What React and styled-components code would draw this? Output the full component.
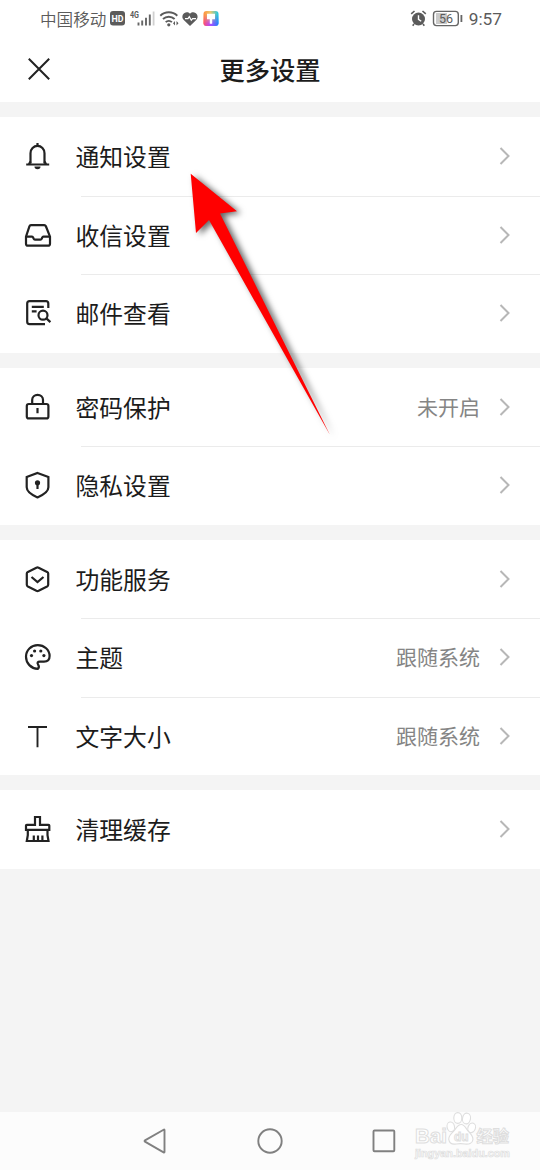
import styled, { createGlobalStyle } from "styled-components";

const icons = {
  bell: (
    <>
      <path d="M8.500 22.500V12.200a7 7.300 0 0 1 14 0v10.300" />
      <path d="M15.500 2v3M4.200 23.500h23M7 23l1.500-2.500M24 23l-1.500-2.500" />
      <path d="M12.500 25.600h6a3 2.700 0 0 1-6 0z" fill="#222" stroke="none" />
    </>
  ),
  inbox: (
    <>
      <path d="M9 5.200h13.200q1.200 0 1.700 1.100L28 16.600v7.100q0 2-2 2H6q-2 0-2-2v-7.100L7.400 6.300Q7.800 5.200 9 5.200z" />
      <path d="M4 16.700h6q.9 0 1.200 1l.4 1q.4 1 1.400 1h5.400q1 0 1.400-1l.4-1q.3-1 1.200-1H28" />
    </>
  ),
  mail: (
    <>
      <path d="M26.300 10V5.500q0-2.300-2.300-2.300H7.500Q5.200 3.200 5.200 5.500v18.300q0 2.300 2.300 2.300H23" />
      <path d="M9.800 8.900h12M9.800 13.300h4.800" />
      <circle cx="21" cy="17.200" r="4.500" />
      <path d="m24.400 20.400 4 3.700" />
    </>
  ),
  lock: (
    <>
      <rect x="4.800" y="12" width="21.600" height="14.400" rx="2" />
      <path d="M10.200 12V7.700a5.400 4.900 0 0 1 10.800 0V12M15.500 16v5.300" />
    </>
  ),
  shield: (
    <>
      <path d="m15.500 3 10.900 3.900v10.400c0 4.500-5.300 7.700-10.900 10.100C9.900 25 4.700 21.800 4.700 17.300V6.900z" />
      <circle cx="15.500" cy="12.800" r="2.600" fill="#222" stroke="none" />
      <path d="M15.500 13v6" />
    </>
  ),
  service: (
    <>
      <path d="m14.400 3.700-8.500 4.200q-1.100.6-1.100 1.700v11.200q0 1.100 1.100 1.700l8.500 4.300q1.100.5 2.200 0l8.500-4.300q1.100-.6 1.100-1.700V9.600q0-1.100-1.100-1.700l-8.500-4.200q-1.100-.5-2.200 0z" />
      <path d="m9.500 13 6 5.100 6-5.100" />
    </>
  ),
  palette: (
    <>
      <path d="M15.800 26.800C9 26.500 4 21.300 4 14.800 4 8.300 9.200 3.200 15.700 3.200S27.600 7.800 27.600 14c0 4-2.200 5.600-5.600 5.600h-4.200c-2.100 0-2.800 1.300-1.800 2.700 1.100 1.600 1.200 3.300-.2 4.500z" />
      <g fill="#222" stroke="none">
        <circle cx="9.500" cy="13.600" r="1.600" />
        <circle cx="12.600" cy="9" r="1.600" />
        <circle cx="18.800" cy="9" r="1.600" />
        <circle cx="21.900" cy="13.600" r="1.600" />
      </g>
    </>
  ),
  text: <path d="M6 6h19M15.500 6v20.300" />,
  brush: (
    <>
      <path d="M13 10.800V3h5v7.800h8.500q.8 0 .8.8v4.300H4v-4.300q0-.8.8-.8z" />
      <path d="M5.800 16v5.200L4.800 27h21.700l-1-5.800V16M11.800 27v-5.600M16 27v-5.600M20.400 27v-5.600" />
    </>
  ),
};

const groups = [
  [
    { icon: "bell", label: "通知设置" },
    { icon: "inbox", label: "收信设置" },
    { icon: "mail", label: "邮件查看" },
  ],
  [
    { icon: "lock", label: "密码保护", value: "未开启" },
    { icon: "shield", label: "隐私设置" },
  ],
  [
    { icon: "service", label: "功能服务" },
    { icon: "palette", label: "主题", value: "跟随系统" },
    { icon: "text", label: "文字大小", value: "跟随系统" },
  ],
  [{ icon: "brush", label: "清理缓存" }],
];

function StatusIcons() {
  return (
    <svg width="112" height="20" viewBox="0 0 112 20">
      <rect x="1" y="2" width="15" height="14.500" rx="3" fill="#5b5b5b" />
      <StatusText x="2.500" y="12.800" $size={9.500} $color="#fff" $bold textLength="12" lengthAdjust="spacingAndGlyphs">HD</StatusText>
      <StatusText x="21" y="9" $size={9} $bold textLength="9" lengthAdjust="spacingAndGlyphs">4G</StatusText>
      <path d="M29.500 16.500v-3M33.200 16.500v-5M37 16.500V8.700M40.800 16.500V5.500" stroke="#666" strokeWidth="1.900" />
      <path d="M44.600 16.500V2.500" stroke="#d0d0d0" strokeWidth="1.800" />
      <g fill="none" stroke="#5b5b5b" strokeWidth="1.900">
        <path d="M51.300 6.700a12.300 12.300 0 0 1 17 0M54 10a8.400 8.400 0 0 1 11.600 0M56.700 13.100a4.500 4.500 0 0 1 6.200 0" />
      </g>
      <circle cx="59.800" cy="15.800" r="1.600" fill="#5b5b5b" />
      <path d="m66 12-2 2.300 2 2.300zm1.500 0 2 2.300-2 2.300z" fill="#5b5b5b" />
      <path d="M81 17 74.800 11C70.500 6.500 77 .3 81 4.700c4-4.400 10.500 1.800 6.200 6.300z" fill="#5b5b5b" />
      <path d="M76 9.700h3l1.300-2 2 3.600 1.300-1.600H87" fill="none" stroke="#fff" strokeWidth="1.200" />
      <defs>
        <linearGradient id="theme" x1="0" y1="0" x2="1" y2="0">
          <stop offset="0" stopColor="#ff8f3c" />
          <stop offset=".45" stopColor="#ecc96e" />
          <stop offset="1" stopColor="#16c8e8" />
        </linearGradient>
        <linearGradient id="themeLow" x1="0" y1="0" x2="1" y2="0">
          <stop offset="0" stopColor="#ff4b75" />
          <stop offset=".45" stopColor="#b04cff" />
          <stop offset="1" stopColor="#237cff" />
        </linearGradient>
        <linearGradient id="fade" x1="0" y1="0" x2="0" y2="1">
          <stop offset=".2" stopColor="#000" />
          <stop offset=".8" stopColor="#fff" />
        </linearGradient>
        <mask id="low">
          <rect x="94" y="2" width="16" height="16" fill="url(#fade)" />
        </mask>
      </defs>
      <rect x="94.500" y="2" width="15" height="15" rx="3" fill="url(#theme)" />
      <rect x="94.500" y="2" width="15" height="15" rx="3" fill="url(#themeLow)" mask="url(#low)" />
      <path d="M98 4.700h8v5.500h-2.800v4.500h-2.400v-4.500H98z" fill="#fff" />
    </svg>
  );
}

function AlarmBattery() {
  return (
    <svg width="56" height="20" viewBox="0 0 56 20">
      <circle cx="8.500" cy="10" r="6.500" fill="#5b5b5b" />
      <path d="M1.200 4.800 4.500 2M12.500 2l3.300 2.800M4 15l-1.300 1.800M13 15l1.300 1.800" stroke="#5b5b5b" strokeWidth="1.600" />
      <path d="M8.500 6.300v4l2.700 2" fill="none" stroke="#fff" strokeWidth="1.400" />
      <rect x="26" y="4" width="11" height="11" fill="#cacaca" />
      <rect x="23.500" y="2.400" width="24.800" height="14.200" rx="3" fill="none" stroke="#666" strokeWidth="1.400" />
      <path d="M51.400 6v7" stroke="#666" strokeWidth="1.800" />
      <StatusText x="29" y="13.900" $size={12.500}>56</StatusText>
    </svg>
  );
}

function Row({ icon, label, value }) {
  return (
    <SRow>
      <Icon viewBox="0 0 30 30" $thin={icon === "text"}>{icons[icon]}</Icon>
      <Label>{label}</Label>
      <Value>{value}</Value>
      <Chevron viewBox="0 0 12 20">
        <path d="m1.500 2 8 8-8 8" />
      </Chevron>
    </SRow>
  );
}

function Watermark() {
  return (
    <SWatermark viewBox="0 0 110 52">
      <g fill="#fff" stroke="#dedede" strokeWidth="1.100">
        <ellipse cx="38.800" cy="22.800" rx="3.700" ry="4.900" transform="rotate(-12 38.800 22.800)" />
        <ellipse cx="45.800" cy="14" rx="4" ry="5.400" />
        <ellipse cx="54.500" cy="14.500" rx="4" ry="5.400" transform="rotate(10 54.500 14.500)" />
        <ellipse cx="59.700" cy="23.800" rx="3.700" ry="4.900" transform="rotate(20 59.700 23.800)" />
        <path d="M49.300 20.500c-4 0-5 4-8 7.200-3 2.800-5 4.800-4.500 8 .7 4 4.300 4.800 7.300 4.300 3-.5 6-.5 9 0 3.500.6 7.300-.5 7.800-4.300.4-3-1.800-5.500-4.300-8-2.500-2.800-4-7.200-7.300-7.200z" />
      </g>
      <MarkText x="3" y="38.500" $size={20.500} textLength="32" lengthAdjust="spacingAndGlyphs">Bai</MarkText>
      <MarkText x="42" y="37" $size={12.500} textLength="14.500" lengthAdjust="spacingAndGlyphs">du</MarkText>
      <MarkText x="64.500" y="37.500" $size={16} textLength="32.500" lengthAdjust="spacingAndGlyphs">经验</MarkText>
      <MarkText x="3" y="52.500" $size={10.500} $small textLength="95" lengthAdjust="spacingAndGlyphs">jingyan.baidu.com</MarkText>
    </SWatermark>
  );
}

export default function App() {
  return (
    <Page>
      <GlobalStyle />
      <StatusBar>
        <Carrier>中国移动</Carrier>
        <StatusIcons />
        <StatusRight>
          <AlarmBattery />
          <Clock>9:57</Clock>
        </StatusRight>
      </StatusBar>

      <Header>
        <CloseIcon viewBox="0 0 24 24">
          <path d="m1.800 1.800 20.400 20.400M22.200 1.800 1.800 22.200" />
        </CloseIcon>
        <Title>更多设置</Title>
      </Header>

      <Groups>
        {groups.map((rows) => (
          <Group key={rows[0].label}>
            {rows.map((row) => (
              <Row key={row.label} {...row} />
            ))}
          </Group>
        ))}
      </Groups>

      <NavBar>
        <NavIcon viewBox="0 0 28 28">
          <path d="M23.500 3.200v21.600q0 1-.9.500L4 14.700q-.9-.7 0-1.300L22.600 2.700q.9-.5.900.5z" />
        </NavIcon>
        <NavIcon viewBox="0 0 28 28">
          <circle cx="14" cy="14" r="11.700" />
        </NavIcon>
        <NavIcon viewBox="0 0 28 28">
          <rect x="3.500" y="3.500" width="20.800" height="20.800" rx="1" />
        </NavIcon>
      </NavBar>

      <Watermark />
      <Pointer viewBox="0 0 170 290">
        <path d="M20.700 13.700 67 51.300 50 53.500 160 275 39 60 26 73z" />
      </Pointer>
    </Page>
  );
}

// =========================== STYLES ============================= //

const GlobalStyle = createGlobalStyle`
  * {
    box-sizing: border-box;
  }
  body {
    margin: 0;
    background: #f4f4f4;
    font-family: "Noto Sans CJK SC", sans-serif;
  }
`;

const Page = styled.div`
  position: relative;
  display: flex;
  flex-direction: column;
  width: 540px;
  height: 1170px;
  overflow: hidden;
  background: #f4f4f4;
`;

const StatusBar = styled.div`
  display: flex;
  align-items: center;
  height: 38px;
  padding: 0 38px 0 40px;
  background: #fff;
  color: #5b5b5b;
`;

const Carrier = styled.span`
  width: 69px;
  font-size: 16.6px;
  font-weight: 350;
  line-height: 24px;
  white-space: nowrap;
`;

const StatusRight = styled.div`
  display: flex;
  align-items: center;
  gap: 3px;
  margin-left: auto;
`;

const Clock = styled.span`
  font-family: Roboto, sans-serif;
  font-size: 17.3px;
  font-weight: 400;
  line-height: 20px;
`;

const StatusText = styled.text`
  font-family: Roboto, sans-serif;
  font-size: ${(props) => props.$size}px;
  font-weight: ${(props) => (props.$bold ? 700 : 400)};
  fill: ${(props) => props.$color || "#5b5b5b"};
`;

const Header = styled.div`
  display: grid;
  grid-template-columns: 60px 1fr 60px;
  align-items: center;
  height: 64px;
  padding: 0 27px 2px;
  background: #fff;
`;

const CloseIcon = styled.svg`
  width: 24px;
  height: 24px;
  fill: none;
  stroke: #222;
  stroke-width: 2;
`;

const Title = styled.h1`
  margin: 0;
  color: #1c1c1c;
  font-size: 25.3px;
  font-weight: 500;
  line-height: 36px;
  text-align: center;
`;

const Groups = styled.div`
  display: flex;
  flex: 1;
  flex-direction: column;
  gap: 15px;
  padding-top: 15px;
`;

const Group = styled.div`
  background: #fff;
`;

const SRow = styled.div`
  display: flex;
  align-items: center;
  height: 78.5px;
  padding: 0 29px 0 22px;

  & + & {
    background: linear-gradient(#ebebeb, #ebebeb) 81px 0 / 459px 1px no-repeat;
  }
`;

const Icon = styled.svg`
  width: 30px;
  height: 30px;
  margin-right: 23.5px;
  fill: none;
  stroke: #222;
  stroke-width: ${(props) => (props.$thin ? 1.9 : 2.2)};
`;

const Label = styled.span`
  padding-bottom: 0.5px;
  color: #1c1c1c;
  font-size: 23.8px;
  line-height: 34px;
`;

const Value = styled.span`
  margin-left: auto;
  margin-right: 19px;
  padding-bottom: 2.5px;
  color: #858585;
  font-size: 21px;
  line-height: 30px;
`;

const Chevron = styled.svg`
  width: 12px;
  height: 20px;
  fill: none;
  stroke: #b7b7b7;
  stroke-width: 2;
`;

const NavBar = styled.div`
  display: flex;
  align-items: center;
  justify-content: space-between;
  height: 58px;
  padding: 0 142px 0 141px;
  background: #fcfcfc;
`;

const NavIcon = styled.svg`
  width: 28px;
  height: 28px;
  fill: none;
  stroke: #808080;
  stroke-width: 1.9;
`;

const SWatermark = styled.svg`
  position: absolute;
  right: 18px;
  bottom: 14px;
  width: 110px;
  height: 52px;
  overflow: visible;
`;

const MarkText = styled.text`
  font-family: "Liberation Sans", "Noto Sans CJK SC", sans-serif;
  font-size: ${(props) => props.$size}px;
  font-weight: 700;
  fill: #fff;
  stroke: #dedede;
  stroke-width: ${(props) => (props.$small ? 0.7 : 1)};
`;

const Pointer = styled.svg`
  position: absolute;
  top: 160px;
  left: 170px;
  width: 170px;
  height: 290px;
  overflow: visible;
  fill: #f00;
  filter: drop-shadow(4px 2px 3px rgba(0, 0, 0, 0.6));
`;
